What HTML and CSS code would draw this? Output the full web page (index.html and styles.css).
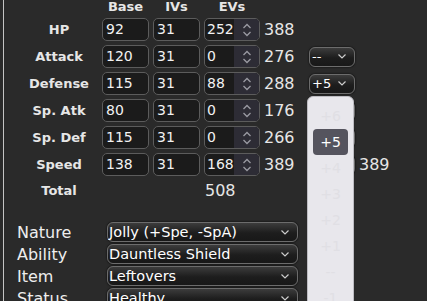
FILE: index.html
```html
<!DOCTYPE html>
<html lang="en">
<head>
    <meta charset="UTF-8">
    <title>Stats</title>
    <link rel="stylesheet" href="styles.css">
</head>
<body>
    <div class="panel">
        <div class="stats">
            <div></div>
            <div class="head">Base</div>
            <div class="head">IVs</div>
            <div class="head">EVs</div>
            <div></div><div></div><div></div>

            <div class="label">HP</div>
            <div class="box">92</div>
            <div class="box">31</div>
            <div class="box ev"><span>252</span><i class="spin"><svg viewBox="0 0 10 16" width="10" height="16"><path d="M1.5 6 5 2.5 8.5 6M1.5 10 5 13.5 8.5 10" fill="none" stroke="#9a9aa2" stroke-width="1.3"/></svg></i></div>
            <div class="total">388</div>
            <div></div><div></div>

            <div class="label">Attack</div>
            <div class="box">120</div>
            <div class="box">31</div>
            <div class="box ev"><span>0</span><i class="spin"><svg viewBox="0 0 10 16" width="10" height="16"><path d="M1.5 6 5 2.5 8.5 6M1.5 10 5 13.5 8.5 10" fill="none" stroke="#9a9aa2" stroke-width="1.3"/></svg></i></div>
            <div class="total">276</div>
            <div class="boost">--<svg viewBox="0 0 8 5" width="8" height="5"><path d="M.5 .5 4 4 7.5 .5" fill="none" stroke="#ccc" stroke-width="1.2"/></svg></div>
            <div></div>

            <div class="label">Defense</div>
            <div class="box">115</div>
            <div class="box">31</div>
            <div class="box ev"><span>88</span><i class="spin"><svg viewBox="0 0 10 16" width="10" height="16"><path d="M1.5 6 5 2.5 8.5 6M1.5 10 5 13.5 8.5 10" fill="none" stroke="#9a9aa2" stroke-width="1.3"/></svg></i></div>
            <div class="total">288</div>
            <div class="boost">+5<svg viewBox="0 0 8 5" width="8" height="5"><path d="M.5 .5 4 4 7.5 .5" fill="none" stroke="#ccc" stroke-width="1.2"/></svg></div>
            <div></div>

            <div class="label">Sp. Atk</div>
            <div class="box">80</div>
            <div class="box">31</div>
            <div class="box ev"><span>0</span><i class="spin"><svg viewBox="0 0 10 16" width="10" height="16"><path d="M1.5 6 5 2.5 8.5 6M1.5 10 5 13.5 8.5 10" fill="none" stroke="#9a9aa2" stroke-width="1.3"/></svg></i></div>
            <div class="total">176</div>
            <div class="boost"></div>
            <div></div>

            <div class="label">Sp. Def</div>
            <div class="box">115</div>
            <div class="box">31</div>
            <div class="box ev"><span>0</span><i class="spin"><svg viewBox="0 0 10 16" width="10" height="16"><path d="M1.5 6 5 2.5 8.5 6M1.5 10 5 13.5 8.5 10" fill="none" stroke="#9a9aa2" stroke-width="1.3"/></svg></i></div>
            <div class="total">266</div>
            <div class="boost"></div>
            <div></div>

            <div class="label">Speed</div>
            <div class="box">138</div>
            <div class="box">31</div>
            <div class="box ev"><span>168</span><i class="spin"><svg viewBox="0 0 10 16" width="10" height="16"><path d="M1.5 6 5 2.5 8.5 6M1.5 10 5 13.5 8.5 10" fill="none" stroke="#9a9aa2" stroke-width="1.3"/></svg></i></div>
            <div class="total">389</div>
            <div class="boost"></div>
            <div class="total">389</div>

            <div class="label">Total</div>
            <div></div><div></div>
            <div class="sum">508</div>
            <div></div><div></div><div></div>
        </div>

        <div class="misc">
            <div class="name">Nature</div>
            <div class="select">Jolly (+Spe, -SpA)<svg viewBox="0 0 8 5" width="8" height="5"><path d="M.5 .5 4 4 7.5 .5" fill="none" stroke="#ccc" stroke-width="1.2"/></svg></div>
            <div class="name">Ability</div>
            <div class="select">Dauntless Shield<svg viewBox="0 0 8 5" width="8" height="5"><path d="M.5 .5 4 4 7.5 .5" fill="none" stroke="#ccc" stroke-width="1.2"/></svg></div>
            <div class="name">Item</div>
            <div class="select">Leftovers<svg viewBox="0 0 8 5" width="8" height="5"><path d="M.5 .5 4 4 7.5 .5" fill="none" stroke="#ccc" stroke-width="1.2"/></svg></div>
            <div class="name">Status</div>
            <div class="select">Healthy<svg viewBox="0 0 8 5" width="8" height="5"><path d="M.5 .5 4 4 7.5 .5" fill="none" stroke="#ccc" stroke-width="1.2"/></svg></div>
        </div>

        <ul class="boost-list">
            <li>+6</li>
            <li class="selected">+5</li>
            <li>+4</li>
            <li>+3</li>
            <li>+2</li>
            <li>+1</li>
            <li>--</li>
            <li>-1</li>
        </ul>
    </div>
</body>
</html>
```

FILE: styles.css
```css
body {
    margin: 0;
    background: #2a2a2a;
    color: #e6e6e6;
    font-family: "DejaVu Sans", Verdana, sans-serif;
    height: 100vh;
    overflow: hidden;
}

.panel {
    position: relative;
    margin-left: 3px;
    height: 100%;
    border-left: 1px solid #c4c4c4;
}

.stats {
    display: grid;
    grid-template-columns: 94px 47px 47px 56px 41px 46px auto;
    grid-template-rows: 14px repeat(6, 23px) 20px;
    column-gap: 4px;
    row-gap: 4px;
    align-items: center;
}

.head {
    font-weight: bold;
    font-size: 13px;
    text-align: center;
    line-height: 14px;
    align-self: start;
}

.label {
    font-weight: bold;
    font-size: 13px;
    text-align: center;
    padding-left: 16px;
}

.box {
    box-sizing: border-box;
    height: 23px;
    background: #1b1b1b;
    border: 1px solid #5c5c5c;
    border-radius: 5px;
    font-size: 14px;
    line-height: 21px;
    padding-left: 3px;
    color: #f2f2f2;
}

.box.ev {
    display: flex;
    padding-left: 0;
    overflow: hidden;
}

.box.ev span {
    flex: 1;
    padding-left: 2px;
}

.spin {
    width: 25px;
    background: #2d2c35;
    display: flex;
    align-items: center;
    justify-content: center;
}

.total {
    font-size: 16px;
}

.sum {
    font-size: 16px;
    padding-left: 1px;
}

.boost, .select {
    box-sizing: border-box;
    display: flex;
    align-items: center;
    justify-content: space-between;
    background: linear-gradient(#3c3c3c, #1d1d1d 55%, #181818);
    border: 1px solid #6c6c6c;
    border-radius: 6px;
    box-shadow: 0 0 2px #000;
    color: #fff;
    font-size: 13px;
}

.boost {
    height: 20px;
    padding: 0 8px 0 2px;
}

.misc {
    display: grid;
    grid-template-columns: 90px 191px;
    grid-auto-rows: 20px;
    row-gap: 2px;
    margin-top: 22px;
    padding-left: 13px;
    align-items: center;
}

.name {
    font-size: 16px;
    color: #eee;
}

.select {
    height: 20px;
    font-size: 14.5px;
    padding: 0 8px 0 1px;
}

.boost-list {
    position: absolute;
    left: 303px;
    top: 96px;
    width: 47px;
    height: 230px;
    margin: 0;
    padding: 6px 0 0;
    list-style: none;
    box-sizing: border-box;
    background: #e8e7ec;
    border: 1px solid #bdbcc2;
    border-radius: 6px 6px 0 0;
}

.boost-list li {
    height: 26px;
    line-height: 26px;
    text-align: center;
    font-size: 14px;
    color: #e0dfe4;
}

.boost-list li.selected {
    margin: 0 5px;
    border-radius: 4px;
    background: #55545e;
    color: #fff;
}
```
